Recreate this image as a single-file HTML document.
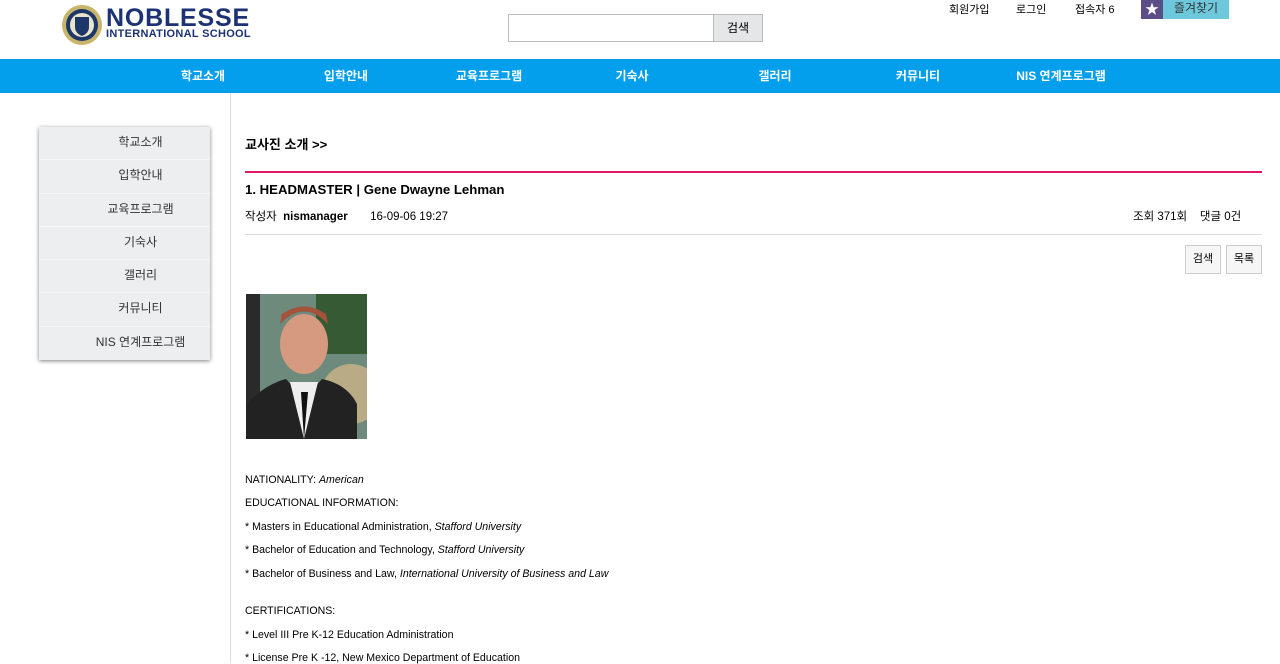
<!DOCTYPE html>
<html><head><meta charset="utf-8"><style>
*{margin:0;padding:0;box-sizing:border-box}
body{width:1280px;height:663px;overflow:hidden;background:#fff;font-family:"Liberation Sans","Noto Sans CJK KR",sans-serif;color:#000;position:relative}
.a{position:absolute}
.nav{top:59px;left:0;width:1280px;height:34px;background:#049fec}
.nav span{position:absolute;top:8px;color:#fff;font-size:12px;font-weight:bold;transform:translateX(-50%)}
.side{left:39px;top:127px;width:171px;height:233px;box-shadow:0 1px 4px rgba(0,0,0,.5);background:#eceeef}
.side div{height:33.3px;line-height:31px;text-align:center;padding-left:32px;font-size:12px;color:#333;border-bottom:1px solid #f4f5f6}
.t{font-size:10.6px;left:245px}
</style></head><body>
<svg class="a" style="left:61px;top:4px" width="42" height="42"><circle cx="21" cy="21" r="20" fill="#c9b56a"/><circle cx="21" cy="21" r="16" fill="#1d3769"/><circle cx="21" cy="21" r="12" fill="#e9e4cc"/><path d="M14 13h14v10q0 6-7 9q-7-3-7-9z" fill="#1d3769"/></svg>
<div class="a" style="left:106px;top:5px;font-size:25px;font-weight:900;color:#1d3275;letter-spacing:0.8px;line-height:26px">NOBLESSE</div>
<div class="a" style="left:106px;top:28px;font-size:11px;font-weight:bold;color:#1d3275;letter-spacing:0.3px">INTERNATIONAL SCHOOL</div>
<div class="a" style="left:508px;top:14px;width:206px;height:28px;border:1px solid #bbb"></div>
<div class="a" style="left:713px;top:14px;width:50px;height:28px;background:#e4e6e8;border:1px solid #bbb;font-size:12px;text-align:center;line-height:26px">검색</div>
<div class="a" style="left:949px;top:1px;font-size:11px">회원가입</div>
<div class="a" style="left:1016px;top:1px;font-size:11px">로그인</div>
<div class="a" style="left:1075px;top:1px;font-size:11px">접속자 6</div>
<div class="a" style="left:1141px;top:0;width:22px;height:19px;background:#5a4e87;color:#fff;text-align:center;font-size:14px;line-height:18px">★</div>
<div class="a" style="left:1163px;top:0;width:66px;height:19px;background:#6ec8dc;font-size:12px;text-align:center;line-height:16px;color:#333">즐겨찾기</div>
<div class="a nav">
<span style="left:203px">학교소개</span><span style="left:346px">입학안내</span><span style="left:489px">교육프로그램</span><span style="left:632px">기숙사</span><span style="left:775px">갤러리</span><span style="left:918px">커뮤니티</span><span style="left:1061px">NIS 연계프로그램</span></div>
<div class="a" style="left:230px;top:93px;width:1px;height:570px;background:#ddd"></div>
<div class="a side"><div>학교소개</div><div>입학안내</div><div>교육프로그램</div><div>기숙사</div><div>갤러리</div><div>커뮤니티</div><div style="border:0">NIS 연계프로그램</div></div>
<div class="a" style="left:245px;top:134px;font-size:13px;font-weight:bold">교사진 소개 &gt;&gt;</div>
<div class="a" style="left:245px;top:171px;width:1017px;height:2px;background:#e0186c"></div>
<div class="a" style="left:245px;top:182px;font-size:13.2px;font-weight:bold">1. HEADMASTER | Gene Dwayne Lehman</div>
<div class="a" style="left:245px;top:208px;font-size:11.5px">작성자 &nbsp;<b>nismanager</b> &nbsp;&nbsp;&nbsp;&nbsp;&nbsp;&nbsp;16-09-06 19:27</div>
<div class="a" style="left:1133px;top:208px;font-size:11.5px">조회 371회 &nbsp;&nbsp;&nbsp;댓글 0건</div>
<div class="a" style="left:245px;top:234px;width:1017px;height:1px;background:#ddd"></div>
<div class="a" style="left:1185px;top:245px;width:36px;height:29px;border:1px solid #ccc;background:#f6f6f6;font-size:11px;text-align:center;line-height:27px">검색</div>
<div class="a" style="left:1226px;top:245px;width:36px;height:29px;border:1px solid #ccc;background:#f6f6f6;font-size:11px;text-align:center;line-height:27px">목록</div>
<svg class="a" style="left:246px;top:294px" width="121" height="145"><rect width="121" height="145" fill="#6d8a7c"/><rect x="0" y="0" width="14" height="145" fill="#2a2a2a"/><rect x="70" y="0" width="51" height="60" fill="#355a34"/><circle cx="105" cy="100" r="30" fill="#b8ab85"/><ellipse cx="58" cy="50" rx="24" ry="30" fill="#d59a80"/><path d="M34 30q24-25 48 0l-2-10q-22-15-44 0z" fill="#a5523a"/><path d="M0 145V110q20-20 40-25l18 20 18-20q25 5 35 25v35z" fill="#222"/><path d="M44 88l14 57 14-57z" fill="#eee"/><path d="M55 98l3 47 4-47z" fill="#111"/></svg>
<div class="a t" style="top:474px">NATIONALITY: <i>American</i></div>
<div class="a t" style="top:497px">EDUCATIONAL INFORMATION:</div>
<div class="a t" style="top:521px">* Masters in Educational Administration, <i>Stafford University</i></div>
<div class="a t" style="top:544px">* Bachelor of Education and Technology, <i>Stafford University</i></div>
<div class="a t" style="top:568px">* Bachelor of Business and Law, <i>International University of Business and Law</i></div>
<div class="a t" style="top:605px">CERTIFICATIONS:</div>
<div class="a t" style="top:629px">* Level III Pre K-12 Education Administration</div>
<div class="a t" style="top:652px">* License Pre K -12, New Mexico Department of Education</div>
</body></html>
